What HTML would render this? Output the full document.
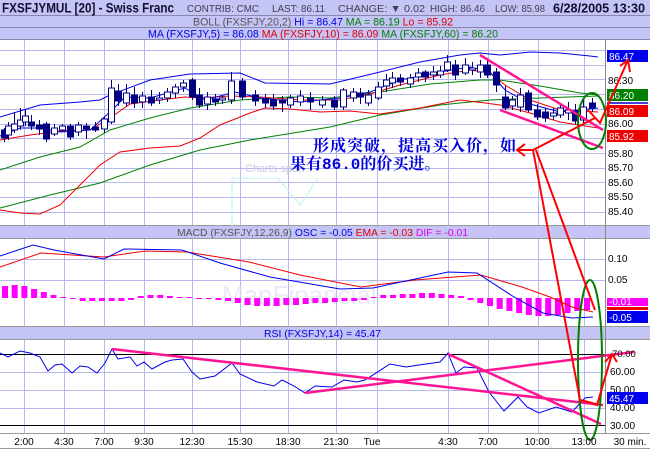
<!DOCTYPE html><html><head><meta charset="utf-8"><style>
body{margin:0;width:650px;height:450px;overflow:hidden;background:#fff;font-family:"Liberation Sans",sans-serif}
svg{display:block}
</style></head><body>
<svg id="s" width="650" height="450" xmlns="http://www.w3.org/2000/svg" font-family="Liberation Sans, sans-serif">
<rect width="650" height="450" fill="#fff"/>
<rect x="0" y="0" width="650" height="15" fill="#c4c4f6"/>
<rect x="0" y="16" width="650" height="11" fill="#c4c4f6"/>
<rect x="0" y="28" width="650" height="11" fill="#c4c4f6"/>
<line x1="0" y1="15.5" x2="650" y2="15.5" stroke="#8888aa"/>
<line x1="0" y1="27.5" x2="650" y2="27.5" stroke="#8888aa"/>
<line x1="0" y1="39.5" x2="650" y2="39.5" stroke="#8888aa"/>
<text x="2" y="12.5" font-size="14" font-weight="bold" fill="#101030" textLength="172" lengthAdjust="spacingAndGlyphs">FXSFJYMUL [20] - Swiss Franc</text>
<text x="187" y="12" font-size="10.5" fill="#404050" textLength="72" lengthAdjust="spacingAndGlyphs">CONTRIB: CMC</text>
<text x="272" y="12" font-size="10.5" fill="#404050" textLength="53" lengthAdjust="spacingAndGlyphs">LAST: 86.11</text>
<text x="338" y="12" font-size="10.5" fill="#404050" textLength="87" lengthAdjust="spacingAndGlyphs">CHANGE: ▼ 0.02</text>
<text x="430" y="12" font-size="10.5" fill="#404050" textLength="55" lengthAdjust="spacingAndGlyphs">HIGH: 86.46</text>
<text x="495" y="12" font-size="10.5" fill="#404050" textLength="50" lengthAdjust="spacingAndGlyphs">LOW: 85.98</text>
<text x="553" y="12.5" font-size="13" font-weight="bold" fill="#101030" textLength="92" lengthAdjust="spacingAndGlyphs">6/28/2005 13:30</text>
<text x="193" y="25.5" font-size="11" textLength="260" lengthAdjust="spacingAndGlyphs"><tspan fill="#555">BOLL (FXSFJY,20,2) </tspan><tspan fill="#0000e0">Hi = 86.47 </tspan><tspan fill="#008000">MA = 86.19 </tspan><tspan fill="#e00000">Lo = 85.92</tspan></text>
<text x="148" y="37.5" font-size="11" textLength="350" lengthAdjust="spacingAndGlyphs"><tspan fill="#0000e0">MA (FXSFJY,5) = 86.08 </tspan><tspan fill="#e00000">MA (FXSFJY,10) = 86.09 </tspan><tspan fill="#008000">MA (FXSFJY,60) = 86.20</tspan></text>
<rect x="0" y="226" width="650" height="12" fill="#c4c4f6"/>
<line x1="0" y1="225.5" x2="650" y2="225.5" stroke="#9a9a9a"/>
<line x1="0" y1="238.5" x2="650" y2="238.5" stroke="#9a9a9a"/>
<text x="177" y="236" font-size="10.5" textLength="291" lengthAdjust="spacingAndGlyphs"><tspan fill="#555">MACD (FXSFJY,12,26,9) </tspan><tspan fill="#0000e0">OSC = -0.05 </tspan><tspan fill="#e00000">EMA = -0.03 </tspan><tspan fill="#e000e0">DIF = -0.01</tspan></text>
<rect x="0" y="327" width="650" height="12" fill="#c4c4f6"/>
<line x1="0" y1="326.5" x2="650" y2="326.5" stroke="#9a9a9a"/>
<line x1="0" y1="339.5" x2="650" y2="339.5" stroke="#9a9a9a"/>
<text x="264" y="337" font-size="10.5" fill="#0000e0" textLength="117" lengthAdjust="spacingAndGlyphs">RSI (FXSFJY,14) = 45.47</text>
<line x1="0" y1="433.5" x2="650" y2="433.5" stroke="#9a9a9a"/>
<line x1="0" y1="448.5" x2="650" y2="448.5" stroke="#9a9a9a"/>
<g id="grid" stroke="#b8b8f0" stroke-width="1"></g>
<line x1="605.5" y1="40" x2="605.5" y2="433" stroke="#888"/>
<text x="245" y="172" font-size="11" fill="#c8c8ec">Charts span</text>
<path d="M232 178 L232 226 M232 178 L278 178 L300 205 L318 178" stroke="#c0f0f0" fill="none"/>
<text x="222" y="304" font-size="26" fill="#e0e0f8" opacity="0.7">ManFinancial</text>
<g id="main"></g>
<g font-size="10" fill="#000">
<text x="608" y="84">86.30</text>
<text x="608" y="127">86.00</text>
<text x="608" y="157">85.80</text>
<text x="608" y="171">85.70</text>
<text x="608" y="186">85.60</text>
<text x="608" y="200">85.50</text>
<text x="608" y="215">85.40</text>
<text x="608" y="262">0.10</text>
<text x="608" y="283">0.05</text>
<text x="612" y="357" font-size="9.5">70.00</text>
<text x="610" y="375">60.00</text>
<text x="610" y="393">50.00</text>
<text x="610" y="411">40.00</text>
<text x="610" y="429">30.00</text>
</g>
<rect x="607" y="50" width="41" height="12" fill="#0000ee"/><text x="609" y="60" font-size="10" fill="#fff">86.47</text>
<rect x="607" y="89" width="41" height="12" fill="#008000"/><text x="609" y="99" font-size="10" fill="#fff">86.20</text>
<line x1="607" y1="103" x2="648" y2="103" stroke="#0000cc" stroke-width="1.5"/>
<rect x="607" y="105" width="41" height="12" fill="#ee0000"/><text x="609" y="115" font-size="10" fill="#fff">86.09</text>
<rect x="607" y="130" width="41" height="12" fill="#ee0000"/><text x="609" y="140" font-size="10" fill="#fff">85.92</text>
<rect x="607" y="298" width="41" height="8" fill="#ff00ff"/><text x="609" y="305" font-size="10" fill="#fff">-0.01</text>
<rect x="607" y="307" width="41" height="3" fill="#ee0000"/>
<rect x="607" y="311" width="41" height="12" fill="#0000ee"/><text x="609" y="321" font-size="10" fill="#fff">-0.05</text>
<rect x="607" y="392" width="41" height="12" fill="#0000ee"/><text x="609" y="402" font-size="10" fill="#fff">45.47</text>
<g font-size="10" fill="#000" text-anchor="middle">
<text x="24" y="445">2:00</text><text x="64" y="445">4:30</text><text x="104" y="445">7:00</text><text x="144" y="445">9:30</text><text x="192" y="445">12:30</text><text x="240" y="445">15:30</text><text x="288" y="445">18:30</text><text x="336" y="445">21:30</text><text x="372" y="445">Tue</text><text x="448" y="445">4:30</text><text x="488" y="445">7:00</text><text x="537" y="445">10:00</text><text x="584" y="445">13:00</text><text x="630" y="445">30 min.</text>
</g>
<text x="313" y="151" font-size="16" font-weight="bold" fill="#0000e0" letter-spacing="1" font-family="Liberation Mono, Noto Serif CJK SC, serif">形成突破，提高买入价，如</text>
<text x="290" y="169" font-size="16" font-weight="bold" fill="#0000e0" font-family="Liberation Mono, Noto Serif CJK SC, serif">果有86.0的价买进。</text>
<g id="anno"></g>
</svg>
<script>
var NS="http://www.w3.org/2000/svg";
function el(p,t,a){var e=document.createElementNS(NS,t);for(var k in a)e.setAttribute(k,a[k]);document.getElementById(p).appendChild(e);return e;}
var vx=[24,64,104,144,192,240,288,336,377,448,488,538,584];
vx.forEach(function(x){[[40,225],[239,326],[340,433]].forEach(function(r){el('grid','line',{x1:x+.5,y1:r[0],x2:x+.5,y2:r[1]});});});
for(var y=50;y<=213;y+=14.7)el('grid','line',{x1:0,y1:Math.round(y)+.5,x2:605,y2:Math.round(y)+.5});
[259,280].forEach(function(y){el('grid','line',{x1:0,y1:y+.5,x2:605,y2:y+.5});});
[372,390,408].forEach(function(y){el('grid','line',{x1:0,y1:y+.5,x2:605,y2:y+.5});});
function pl(id,pts,c,w){el(id,'polyline',{points:pts,fill:'none',stroke:c,'stroke-width':w||1});}
var C=[[4,130,138,128,142,1],[8,126,135,122,140,0],[14,124,130,112,133,0],[20,120,126,108,130,0],[25,116,122,110,126,0],[31,122,126,115,130,1],[39,125,129,120,135,1],[46,124,139,122,142,1],[54,128,134,124,136,0],[62,126,130,124,132,0],[70,126,137,124,140,1],[78,125,132,122,136,0],[86,126,129,123,139,1],[95,127,130,122,132,1],[104,119,129,117,133,0],[111,88,122,80,124,0],[118,91,101,84,106,1],[126,93,103,84,106,0],[134,95,103,87,108,1],[142,96,102,92,108,0],[151,97,103,90,106,1],[159,98,100,92,104,0],[167,92,98,88,102,0],[175,87,93,84,98,0],[183,83,87,80,92,0],[192,80,97,78,100,1],[199,95,105,88,108,1],[207,97,104,92,110,0],[215,99,102,94,106,1],[222,98,100,95,104,0],[231,81,100,72,104,0],[242,81,97,78,100,1],[255,95,101,90,106,1],[265,99,103,94,108,1],[273,100,106,94,110,1],[282,100,103,96,112,1],[290,98,105,95,108,0],[300,96,102,90,106,0],[310,98,102,92,110,1],[322,100,105,96,108,0],[334,100,107,96,110,1],[343,90,107,88,110,0],[353,92,98,88,102,0],[360,93,97,88,104,1],[368,95,103,90,106,0],[378,87,98,82,100,0],[386,80,86,74,92,0],[392,78,83,72,88,0],[400,78,82,74,86,1],[410,78,84,74,88,0],[418,73,77,68,82,0],[425,72,77,70,82,1],[433,72,75,66,80,0],[440,71,75,66,78,0],[447,62,70,55,72,0],[455,65,75,60,80,1],[465,65,73,58,75,0],[472,68,70,62,75,0],[480,65,72,60,78,0],[487,65,75,58,78,1],[496,72,85,68,92,1],[505,97,108,86,110,1],[512,100,106,96,110,0],[520,95,107,88,112,0],[528,93,110,90,112,1],[537,110,117,104,120,1],[545,112,118,108,122,1],[553,113,116,108,120,0],[560,108,115,104,118,0],[568,110,113,102,120,0],[575,111,121,104,124,1],[583,107,120,100,124,0],[592,103,108,98,112,1]];
pl('main','0,117 40,105 80,102 100,100 110,95 150,80 190,74 240,73 265,83 330,84 380,72 420,62 460,55 480,53 500,55 530,52 560,53 590,56 598,57','#0000ee');
pl('main','0,170 40,157 80,147 110,130 150,118 190,108 240,100 290,97 330,98 380,92 430,84 480,80 500,80 540,86 580,93 598,95','#008000');
pl('main','0,208 50,195 100,183 150,165 200,150 250,140 330,127 380,115 440,105 490,100 540,98 598,96','#008000');
pl('main','0,210 20,213 40,214 60,205 80,185 100,165 120,152 150,148 180,146 200,138 220,125 250,113 265,108 290,109 320,112 350,111 380,114 420,108 460,100 485,103 500,105 530,113 560,122 598,128','#ee0000');
pl('main','0,140 30,135 60,131 90,130 110,118 130,104 160,100 185,97 200,98 230,96 260,97 300,100 340,100 370,94 400,85 440,75 470,70 490,73 505,85 530,100 560,110 598,112','#ee0000');
pl('main','0,136 20,128 40,128 60,132 90,130 110,112 125,97 150,98 185,88 205,100 235,92 260,98 300,102 340,98 370,92 400,80 440,72 470,67 490,72 505,90 530,104 560,112 598,108','#0000ee');
C.forEach(function(c){el('main','line',{x1:c[0]+.5,y1:c[3],x2:c[0]+.5,y2:c[4],stroke:'#000080'});el('main','rect',{x:c[0]-2.5,y:c[1],width:6,height:c[2]-c[1],fill:c[5]?'#000080':'#fff',stroke:'#000080'});});
el('main','line',{x1:480,y1:55,x2:603,y2:130,stroke:'#ff1493','stroke-width':2.5});
el('main','line',{x1:500,y1:110,x2:603,y2:148,stroke:'#ff1493','stroke-width':2.5});
el('main','ellipse',{cx:592,cy:121,rx:14,ry:28,fill:'none',stroke:'#008000','stroke-width':2});
var H=[12,13,12,9,6,3,1,-1,-3,-3,-3,-3,-3,-2,2,3,3,2,1,1,0,-1,-2,-3,-5,-7,-8,-8,-8,-7,-7,-6,-5,-5,-4,-3,-3,-2,1,3,3,4,4,5,5,4,3,2,-2,-5,-8,-11,-13,-15,-17,-18,-18,-17,-15,-13,-12];
H.forEach(function(h,i){var x=2+i*9.7;var y0=298;el('main','rect',{x:x,y:h>0?y0-h:y0,width:6,height:Math.abs(h)||1,fill:'#ff00ff'});});
pl('main','0,267 41,253 104,257 145,251 187,252 249,262 300,275 361,287 415,280 481,275 522,287 550,297 572,307 593,312','#ee0000');
pl('main','0,256 33,245 54,250 104,259 124,249 182,250 220,263 270,277 340,289 373,288 448,272 477,273 514,297 543,313 572,318 593,317','#0000ee');
el('main','line',{x1:0,y1:354.5,x2:605,y2:354.5,stroke:'#000'});
el('main','line',{x1:0,y1:425.5,x2:605,y2:425.5,stroke:'#000'});
pl('main','0,353 8,357 20,351 30,353 40,357 48,371 55,365 62,364 72,373 80,366 88,367 97,373 105,363 112,349 118,359 130,357 137,366 144,362 152,369 165,362 172,360 183,359 192,372 200,379 215,376 232,363 240,374 257,382 274,386 282,380 294,386 305,393 315,386 332,387 344,380 357,382 365,380 390,364 406,367 419,365 440,362 448,353 456,373 464,367 477,368 489,392 504,411 518,397 527,407 539,413 556,407 572,412 585,398 593,397','#0000ee');
[[112,349,603,405],[305,393,634,352],[448,354,601,424]].forEach(function(l){el('main','line',{x1:l[0],y1:l[1],x2:l[2],y2:l[3],stroke:'#ff1493','stroke-width':2.5});});
el('main','ellipse',{cx:590,cy:360,rx:12,ry:80,fill:'none',stroke:'#008000','stroke-width':2});
el('anno','polyline',{points:'533,150 580,400 592,403 597,405 612,354',fill:'none',stroke:'#ff0000','stroke-width':2});
el('anno','polyline',{points:'536,150 595,310',fill:'none',stroke:'#ff0000','stroke-width':2});
el('anno','polyline',{points:'517,150 533,150 595,118',fill:'none',stroke:'#ff0000','stroke-width':2});
el('anno','polyline',{points:'525,144 517,150 525,156',fill:'none',stroke:'#ff0000','stroke-width':2});
el('anno','polyline',{points:'588,110 600,123 628,60',fill:'none',stroke:'#ff0000','stroke-width':2});
el('anno','polyline',{points:'620,66 628,60 630,72',fill:'none',stroke:'#ff0000','stroke-width':2});
el('anno','polyline',{points:'605,362 612,354 617,362',fill:'none',stroke:'#ff0000','stroke-width':2});
</script>
</body></html>
